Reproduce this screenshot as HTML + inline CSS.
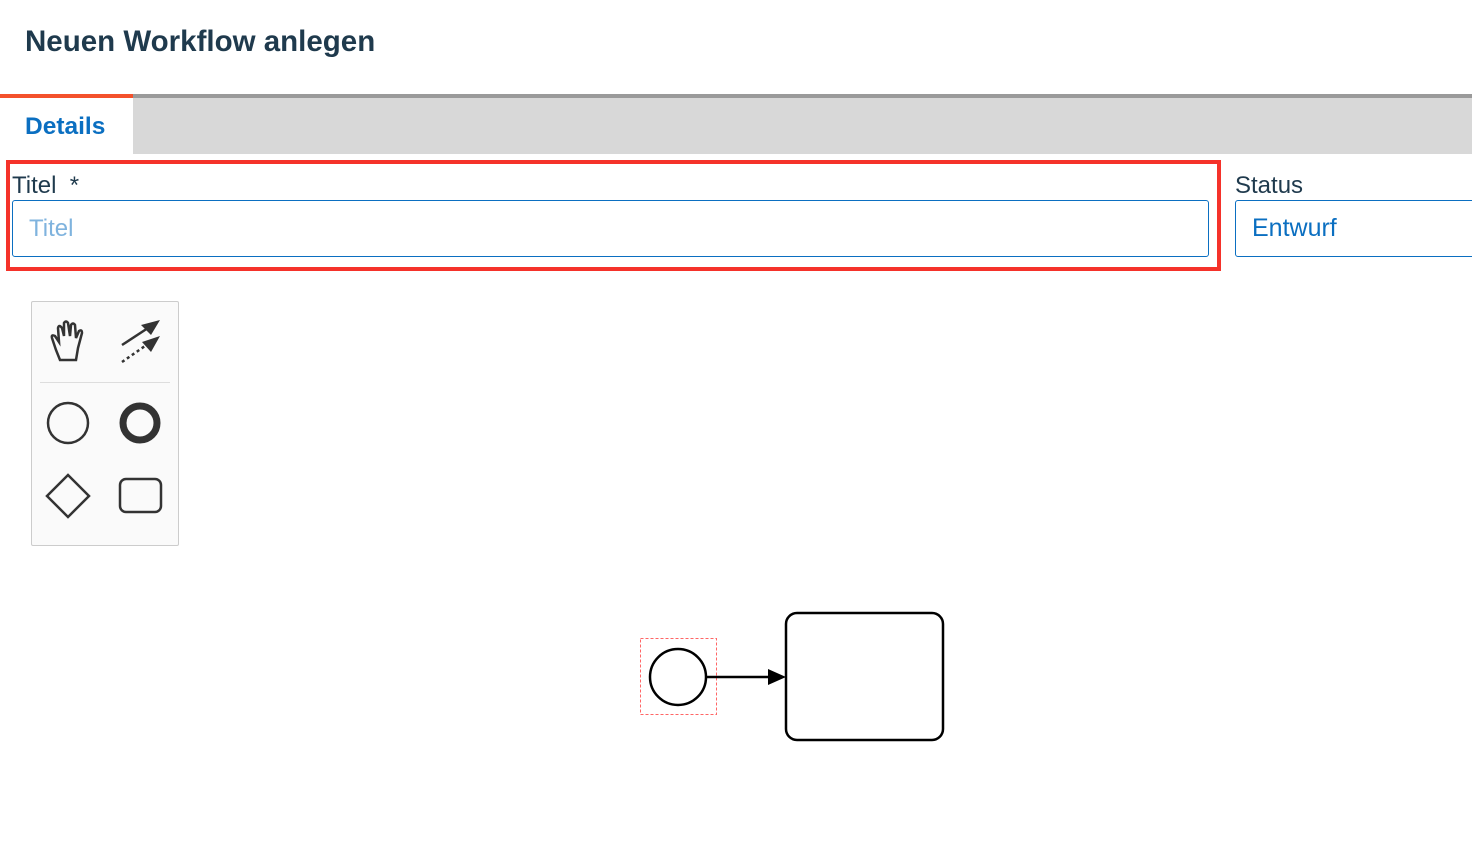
<!DOCTYPE html>
<html><head><meta charset="utf-8"><style>
body{margin:0;width:1472px;height:850px;background:#fff;font-family:"Liberation Sans",sans-serif;position:relative;overflow:hidden}
.a{position:absolute}
</style></head><body>
<div class="a" style="left:25px;top:25px;font-size:29.5px;font-weight:bold;color:#1f3a4d">Neuen Workflow anlegen</div>
<div class="a" style="left:0;top:94px;width:133px;height:4px;background:#f4512c"></div>
<div class="a" style="left:133px;top:94px;width:1339px;height:4px;background:#9a9a9a"></div>
<div class="a" style="left:133px;top:98px;width:1339px;height:56px;background:#d8d8d8"></div>
<div class="a" style="left:25px;top:113px;font-size:24.5px;font-weight:bold;color:#0b6fc1">Details</div>
<div class="a" style="left:6px;top:160px;width:1207px;height:103px;border:4px solid #f5322a"></div>
<div class="a" style="left:12px;top:172px;font-size:24px;color:#1f3a4d">Titel &nbsp;*</div>
<div class="a" style="left:12px;top:200px;width:1195px;height:55px;border:1px solid #0b6fc1;border-radius:3px"></div>
<div class="a" style="left:29px;top:215px;font-size:24px;color:#7fb3de">Titel</div>
<div class="a" style="left:1235px;top:172px;font-size:24px;color:#1f3a4d">Status</div>
<div class="a" style="left:1235px;top:200px;width:260px;height:55px;border:1px solid #0b6fc1;border-radius:3px"></div>
<div class="a" style="left:1252px;top:214px;font-size:25px;color:#0b6fc1">Entwurf</div>
<div class="a" style="left:31px;top:301px;width:146px;height:243px;border:1px solid #ccc;border-radius:2px;background:#fafafa"></div>
<div class="a" style="left:40px;top:382px;width:130px;height:1px;background:#ddd"></div>
<svg class="a" style="left:0;top:0" width="1472" height="850">
<g fill="none" stroke="#333" stroke-width="2.5">
<path d="M56 350 L52 338 Q51 334 55 336 L59 342 L58 328 Q59 324 62 328 L64 336 L64 323 Q66 320 68 323 L70 336 L71 325 Q73 322 75 325 L76 338 L79 331 Q82 329 82 333 L78 348 L76 360 L60 360 Z"/>
<circle cx="68" cy="423" r="20"/>
<circle cx="140" cy="423" r="17" stroke-width="7"/>
<path d="M68 475 L89 496 L68 517 L47 496 Z"/>
<rect x="120" y="479" width="41" height="33" rx="6"/>
<path d="M122 345 L148 328" />
<path d="M122 362 L145 346" stroke-dasharray="3 3"/>
</g>
<path d="M160 320 L141 325 L151 335 Z" fill="#333"/>
<path d="M160 336 L142 342 L151 352 Z" fill="#333"/>
<rect x="640.5" y="638.5" width="76" height="76" fill="none" stroke="#f66" stroke-dasharray="3 2"/>
<circle cx="678" cy="677" r="28" fill="none" stroke="#000" stroke-width="2.5"/>
<path d="M706 677 L772 677" stroke="#000" stroke-width="2.5"/>
<path d="M786 677 L768 669 L768 685 Z" fill="#000"/>
<rect x="786" y="613" width="157" height="127" rx="11" fill="#fff" stroke="#000" stroke-width="2.5"/>
</svg>
</body></html>
